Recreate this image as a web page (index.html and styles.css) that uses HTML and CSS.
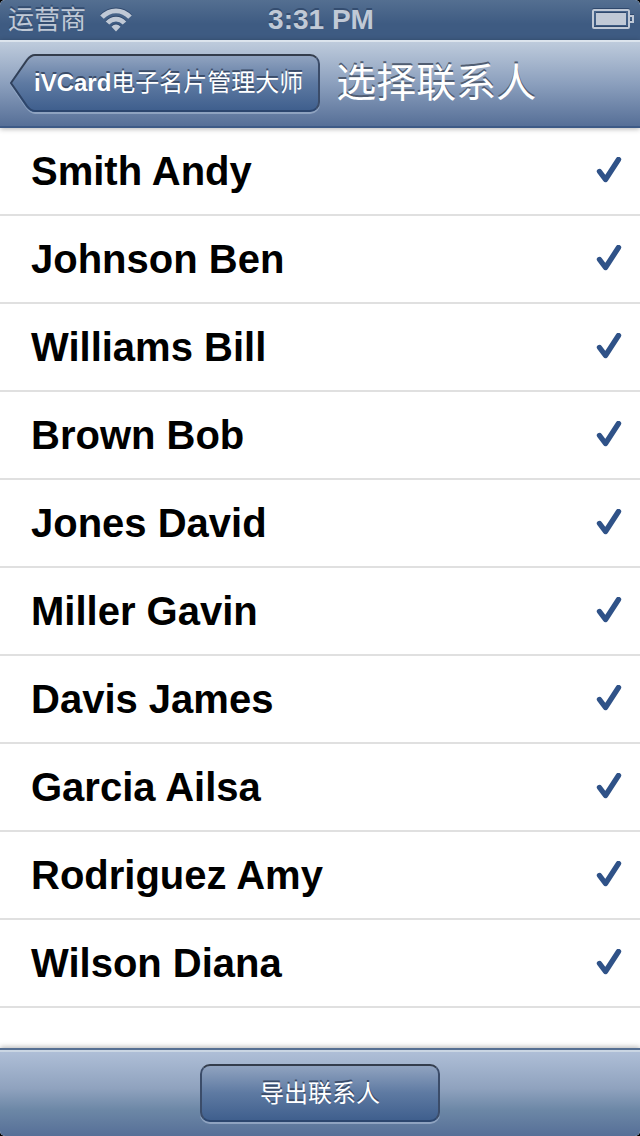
FILE: index.html
```html
<!DOCTYPE html>
<html lang="zh-CN">
<head>
<meta charset="utf-8">
<meta name="viewport" content="width=device-width, initial-scale=1">
<title>选择联系人</title>
<link rel="stylesheet" href="styles.css">
</head>
<body>
<svg width="0" height="0" class="defs" aria-hidden="true">
  <symbol id="check" viewBox="0 0 28 28"><path d="M3.500 14.500L9.500 22.500L22.500 2.500" fill="none" stroke="#2f5288" stroke-width="5.400" stroke-linecap="round" stroke-linejoin="round"/></symbol>
</svg>
<div class="screen">
  <div class="status">
    <div class="carrier">
      <span>运营商</span>
      <svg class="wifi" width="32" height="24" viewBox="0 0 32 24" aria-hidden="true">
        <g fill="none" stroke="#c0c9d6" stroke-width="4.800">
          <path d="M2 9.200C9.700 .7 22.300 .7 30 9.200"/>
          <path d="M7.500 15C12.200 9.800 19.800 9.800 24.500 15"/>
        </g>
        <path d="M11.500 18.800C14.200 15.700 17.800 15.700 20.500 18.800L16 23.600Z" fill="#c0c9d6"/>
      </svg>
    </div>
    <span class="time">3:31 PM</span>
    <svg class="battery" width="42" height="20" viewBox="0 0 42 20" aria-hidden="true">
      <rect x="1" y="1" width="36" height="18" rx="1" fill="none" stroke="#c0c9d6" stroke-width="2"/>
      <rect x="4" y="4" width="30" height="12" fill="#c0c9d6"/>
      <path d="M38 7H41V13H38" fill="none" stroke="#c0c9d6" stroke-width="2"/>
    </svg>
  </div>
  <header class="navbar">
    <button type="button" class="back">
      <svg class="back-tip" width="30" height="60" viewBox="0 0 30 60" aria-hidden="true">
        <defs>
          <linearGradient id="tip" x1="0" y1="0" x2="0" y2="1">
            <stop offset="0" stop-color="#94a6c2"/><stop offset=".5" stop-color="#5e7aa2"/><stop offset="1" stop-color="#3d5d8c"/>
          </linearGradient>
          <linearGradient id="edge" x1="0" y1="0" x2="0" y2="1">
            <stop offset="0" stop-color="#343d4c"/><stop offset="1" stop-color="#2c466e"/>
          </linearGradient>
        </defs>
        <path d="M30 59H25Q21 59 17 54L1 31" fill="none" stroke="#8fa3c0" stroke-width="2"/>
        <path d="M30 0H25Q20 0 16 5L0 29L16 53Q20 58 25 58H30Z" fill="url(#tip)"/>
        <path d="M30 1H25Q21 1 17 6L1 29L17 52Q21 57 25 57H30" fill="none" stroke="url(#edge)" stroke-width="2"/>
      </svg>
      <span class="back-label"><b>iVCard</b>电子名片管理大师</span>
    </button>
    <h1 class="title">选择联系人</h1>
  </header>
  <main class="contacts">
    <label class="row"><span>Smith Andy</span><input type="checkbox" checked><svg class="tick"><use href="#check"/></svg></label>
    <label class="row"><span>Johnson Ben</span><input type="checkbox" checked><svg class="tick"><use href="#check"/></svg></label>
    <label class="row"><span>Williams Bill</span><input type="checkbox" checked><svg class="tick"><use href="#check"/></svg></label>
    <label class="row"><span>Brown Bob</span><input type="checkbox" checked><svg class="tick"><use href="#check"/></svg></label>
    <label class="row"><span>Jones David</span><input type="checkbox" checked><svg class="tick"><use href="#check"/></svg></label>
    <label class="row"><span>Miller Gavin</span><input type="checkbox" checked><svg class="tick"><use href="#check"/></svg></label>
    <label class="row"><span>Davis James</span><input type="checkbox" checked><svg class="tick"><use href="#check"/></svg></label>
    <label class="row"><span>Garcia Ailsa</span><input type="checkbox" checked><svg class="tick"><use href="#check"/></svg></label>
    <label class="row"><span>Rodriguez Amy</span><input type="checkbox" checked><svg class="tick"><use href="#check"/></svg></label>
    <label class="row"><span>Wilson Diana</span><input type="checkbox" checked><svg class="tick"><use href="#check"/></svg></label>
  </main>
  <footer class="toolbar">
    <button type="button" class="export">导出联系人</button>
  </footer>
</div>
</body>
</html>
```
FILE: styles.css
```css
* {
  box-sizing: border-box;
}

body {
  margin: 0;
  background: #000;
  font-family: "Liberation Sans", "Noto Sans CJK SC", sans-serif;
}

.defs {
  position: absolute;
}

.screen {
  display: flex;
  flex-direction: column;
  min-height: 100vh;
  background: #fff;
  border-radius: 5px;
  overflow: hidden;
}

.status {
  display: grid;
  grid-template-columns: 1fr auto 1fr;
  align-items: center;
  height: 40px;
  padding: 0 6px 0 8px;
  background: linear-gradient(#546f91, #3e5b82 60%, #3e5b82);
  color: #c0c9d6;
  text-shadow: 0 -2px 0 #344d70;
}

.carrier {
  display: flex;
  align-items: center;
  gap: 14px;
  font-size: 26px;
  line-height: 40px;
}

.wifi,
.battery {
  filter: drop-shadow(0 -1px 0 #2f486c);
}

.time {
  font-size: 28px;
  font-weight: bold;
  line-height: 40px;
}

.battery {
  justify-self: end;
  margin-bottom: 2px;
}

.navbar {
  position: relative;
  z-index: 1;
  display: flex;
  align-items: center;
  gap: 16px;
  height: 88px;
  padding: 0 10px 2px;
  background: linear-gradient(#becbdc, #8b9fbd 50%, #566f97);
  border-top: 2px solid #dce4ed;
  border-bottom: 2px solid #3d5a86;
  box-shadow: 0 1px 5px rgba(0, 0, 0, 0.3);
}

button {
  border: 0;
  color: #fff;
  font-family: inherit;
  font-size: 24px;
  line-height: 56px;
  text-shadow: 0 -2px 0 #3b4c68;
}

.back {
  position: relative;
  height: 58px;
  padding: 0 17px 0 24px;
  background: none;
  white-space: nowrap;
}

.back::before {
  content: "";
  position: absolute;
  inset: 0 0 0 30px;
  border: 2px solid #344766;
  border-color: #343d4c #3b4c69 #2c466e;
  border-left: 0;
  border-radius: 0 10px 10px 0;
  background: linear-gradient(#94a6c2, #5e7aa2 50%, #3d5d8c) border-box;
  box-shadow: 0 2px 0 #8fa3c0;
}

.back-tip {
  position: absolute;
  top: 0;
  left: 0;
}

.back-label {
  position: relative;
}

.title {
  margin: 0;
  color: #fff;
  font-size: 40px;
  font-weight: 400;
  line-height: 60px;
  white-space: nowrap;
  text-shadow: 0 -2px 0 #505d72;
}

.contacts {
  flex: 1;
}

.row {
  display: flex;
  align-items: center;
  justify-content: space-between;
  height: 88px;
  padding: 0 16px 0 31px;
  border-bottom: 2px solid #e0e0e0;
  color: #000;
  font-size: 40px;
  font-weight: bold;
  line-height: 48px;
}

.row input {
  appearance: none;
  width: 0;
  height: 0;
  margin: 0;
}

.tick {
  width: 28px;
  height: 28px;
  visibility: hidden;
}

.row input:checked + .tick {
  visibility: visible;
}

.toolbar {
  display: flex;
  align-items: center;
  justify-content: center;
  height: 88px;
  background: linear-gradient(#b0c0d8, #8fa2be 45%, #6c87a6 70%, #566f97);
  border-top: 2px solid #566f92;
  box-shadow: 0 -1px 5px rgba(0, 0, 0, 0.3), inset 0 2px 0 #cad6e3;
}

.export {
  min-width: 240px;
  height: 58px;
  padding: 0 20px;
  border: 2px solid #3b4c69;
  border-color: #343d4c #3b4c69 #2c466e;
  border-radius: 10px;
  background: linear-gradient(#94a6c2, #5e7aa2 50%, #3d5d8c) border-box;
  box-shadow: 0 2px 0 #8fa3c0;
}
```
